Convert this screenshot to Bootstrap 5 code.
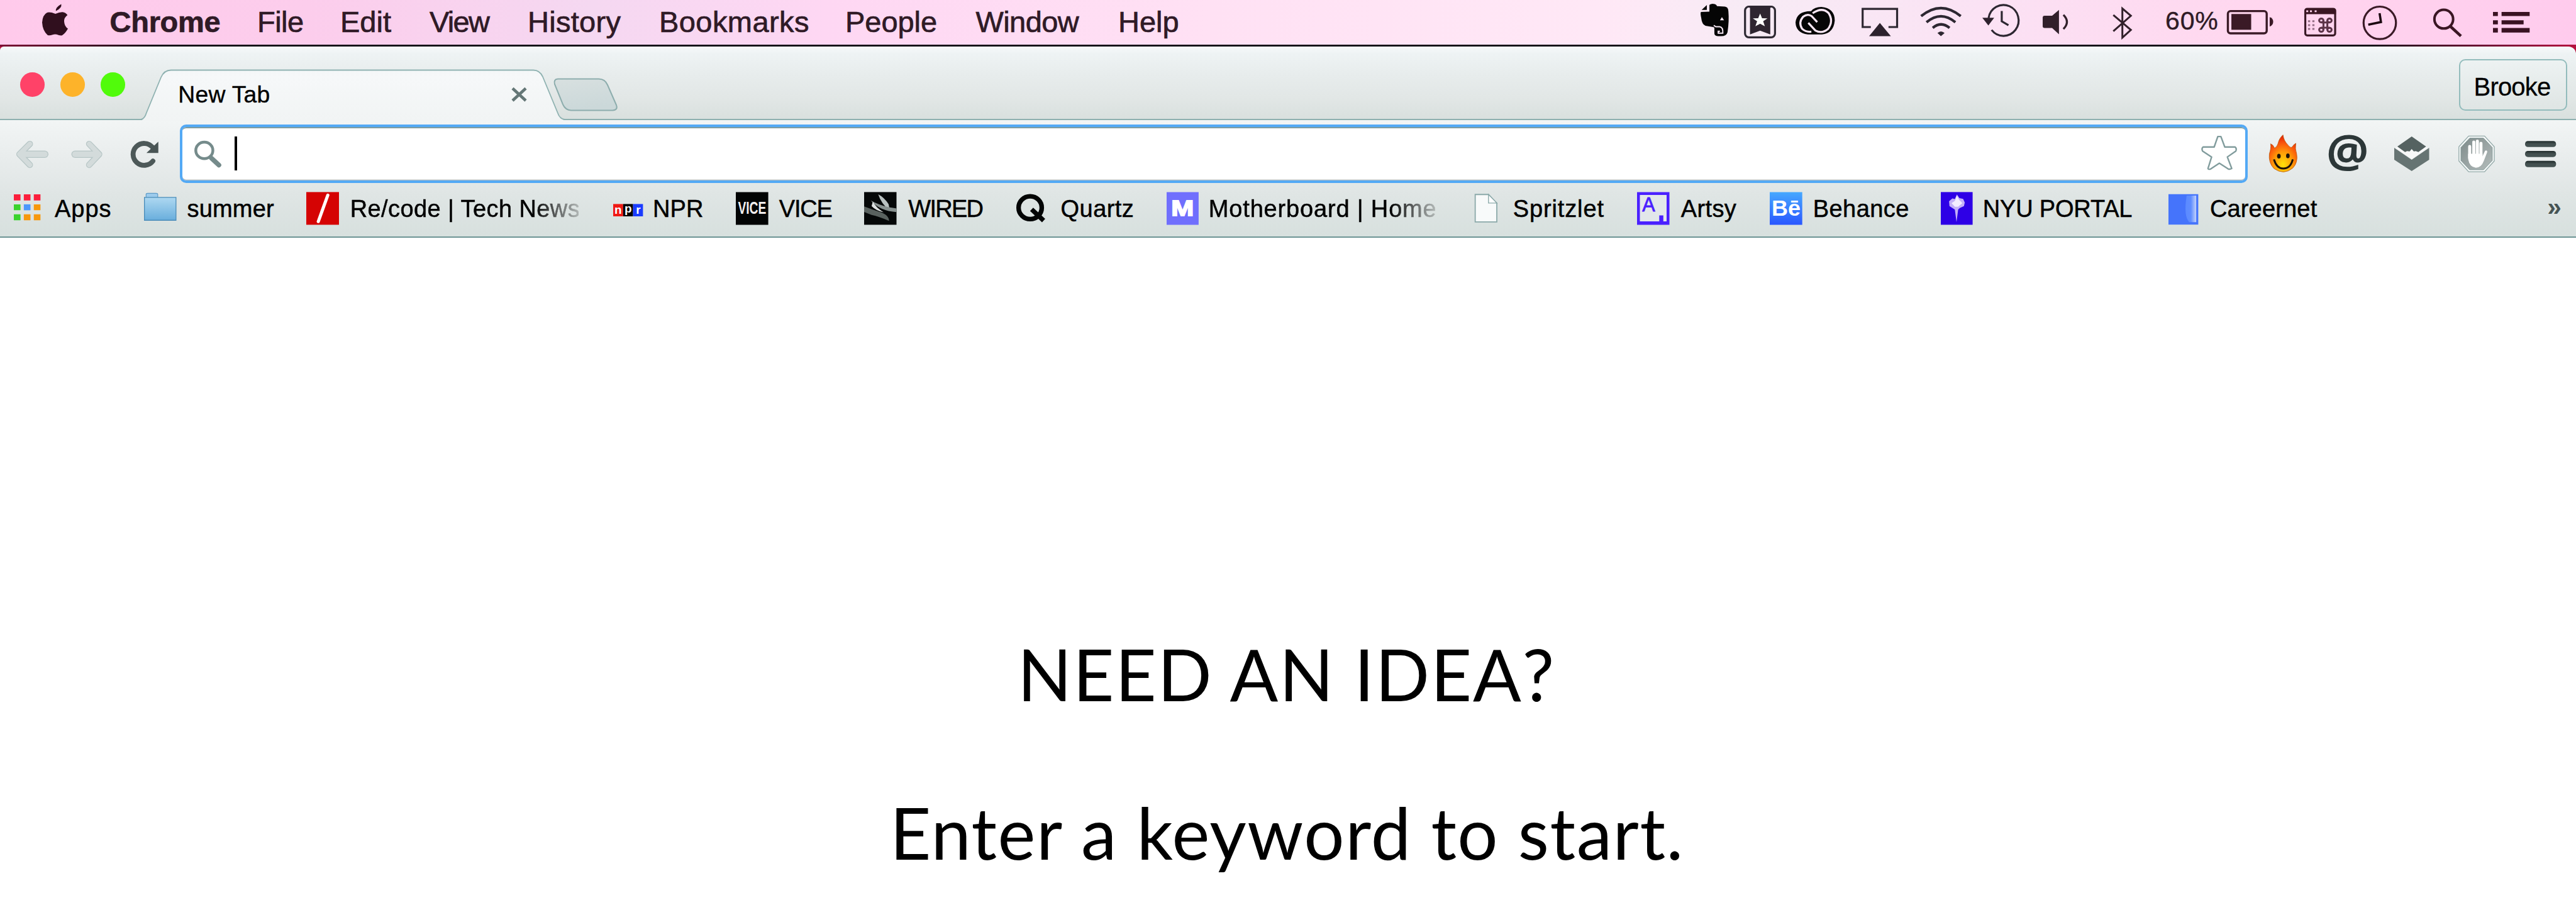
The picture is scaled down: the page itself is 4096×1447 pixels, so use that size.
<!DOCTYPE html>
<html lang="en">
<head>
<meta charset="utf-8">
<title>New Tab</title>
<link href="https://cdn.jsdelivr.net/npm/bootstrap@5.3.0/dist/css/bootstrap.min.css" rel="stylesheet">
<style>
  body { font-family: "Liberation Sans", Arial, sans-serif; background: #fff; color: #000; overflow: hidden; }
  svg { display: block; flex: none; overflow: visible; }
  svg.stretch * { vector-effect: non-scaling-stroke; }
  [data-w] { display: block; flex: none; white-space: nowrap; }
  .macbar { height: 74px; padding: 0 73.7px 0 66.8px; color: #2f1a26;
    border-image: linear-gradient(90deg, #7d0d35, #17151a 6%, #17151a 92%, #7a1238 97%, #b5123f) 1;
    border-width: 0 0 3px; border-style: solid;
    background: linear-gradient(90deg, #ffcaeb 0, #fccdec 12%, #f5d8f1 23%, #fed7f3 32%, #ffe1f4 47%, #ffe8f6 62%, #f7ebf5 68%, #fbe2f4 77%, #ffd7ef 87%, #ffcbed 100%); }
  .macbar [data-w] { font-size: 47px; line-height: 70px; -webkit-text-stroke: .7px #2f1a26; }
  .macbar .pct { font-size: 41px; line-height: 67.6px; -webkit-text-stroke: .4px #2f1a26; }
  .tabstrip-wrap { background: #b5123f; }
  .tabstrip { height: 117px; border-bottom: 2px solid #8eb0af; border-top-right-radius: 12px; border-top-left-radius: 6px;
    background: linear-gradient(#f6f9fa 0, #eef3f4 10%, #e7ecec 40%, #e2e7e6 70%, #d9e0de 100%); padding-left: 32.4px; }
  .light { width: 38.6px; height: 38.6px; border-radius: 50%; margin-top: 41px; margin-right: 25.2px; flex: none; }
  .tab-cell { width: 666px; height: 117px; margin-left: 4px; }
  .tab-art { position: absolute; left: 0; top: 0; }
  .tab-title { font-size: 37.3px; line-height: 37px; margin-top: 57.5px; margin-left: 57.6px; -webkit-text-stroke: .4px #000; }
  .profile-btn { width: 172px; height: 82px; margin: 19.5px 14.5px 0 auto; padding: 4px 0 0 24px; border: 2px solid #93bcbc; border-radius: 10px; background: linear-gradient(#edf2f2, #dfe5e4); flex: none; }
  .profile-btn [data-w] { font-size: 40px; line-height: 77px; -webkit-text-stroke: .3px #000; }
  .chrome-bars { background: linear-gradient(#f2f5f5 0, #e8ecec 35%, #dfe5e4 65%, #d7e0de 100%); border-bottom: 2px solid #6d9494; height: 187px; }
  .toolbar-row { height: 101px; padding-left: 24.5px; }
  .omnibox { width: 3288.4px; height: 92.6px; margin: 7.4px 34px 0 33.6px; border: 4.5px solid #53a9f5; border-radius: 10px; background: #fff; box-shadow: inset 0 3px 0 -1px #7f9c9f, inset 0 -1.5px 0 #b3bdc2; padding: 0 13.3px 0 19.3px; flex: none; }
  .omnibox svg { margin-top: -11.4px; }
  .caret { width: 3.7px; height: 54px; background: #000; margin: 14.7px 0 0 22px; }
  .marks { height: 84px; padding-left: 21.8px; }
  .marks [data-w] { font-size: 38px; line-height: 81px; -webkit-text-stroke: .5px #000; }
  .marks .more { font-size: 40px; font-weight: 700; line-height: 75px; color: #465454; margin-left: auto; margin-right: 25px; -webkit-text-stroke: 0; }
  .faded { -webkit-mask-image: linear-gradient(90deg, #000 0, #000 80%, rgba(0,0,0,.2) 100%); mask-image: linear-gradient(90deg, #000 0, #000 80%, rgba(0,0,0,.2) 100%); }
  .prompt { font-family: Lato, sans-serif; font-size: 113.5px; line-height: 136px; padding-top: 624.5px; gap: 116.6px; }
</style>
</head>
<body>

<header class="macbar d-flex align-items-start">
  <svg class="stretch" width="41" height="71" viewBox="101 0 62 277.3" preserveAspectRatio="none" fill="#300f1e"><path d="M134 68Q133 45 147 25Q149 50 134 68ZM133 86Q143 74 150 75Q158 78 162 94Q153 110 154 136Q155 165 163 178Q157 207 149 220Q143 222 136 214Q131 211 126 216Q119 223 114 218Q102 190 101 140Q102 92 113 78Q120 73 133 86Z"/></svg>
  <b data-gap="66.8" data-w="173.9">Chrome</b>
  <span data-gap="62.5" data-w="70">File</span>
  <span data-gap="62" data-w="78">Edit</span>
  <span data-gap="61" data-w="97">View</span>
  <span data-gap="62" data-w="145.5">History</span>
  <span data-gap="63.5" data-w="234">Bookmarks</span>
  <span data-gap="62" data-w="142">People</span>
  <span data-gap="62.5" data-w="165.3">Window</span>
  <span data-gap="64.2" data-w="92.5">Help</span>

  <div class="d-flex align-items-start ms-auto">
    <svg class="stretch" width="44.6" height="71" viewBox="92 0 130 277.3" preserveAspectRatio="none"><path d="M133 72V30Q140 23 152 24Q165 25 168 38L205 41Q220 43 221 70Q225 130 217 200Q212 226 185 225H172Q155 222 156 205V178Q157 168 150 168L115 160Q98 152 95 110Q90 80 94 74ZM97 62L121 31V62Z" fill="#050505"/><path d="M153 158L163 166H180Q197 168 195 206H174V194H182" fill="none" stroke="#f8e9f6" stroke-width="2"/><path d="M182 126L191 106L201 126Z" fill="#f8e9f6"/></svg>
    <svg data-gap="24" class="stretch" width="51.1" height="71" viewBox="292 0 149 277.3" preserveAspectRatio="none"><rect x="297" y="41" width="139" height="191" rx="18" ry="24" fill="none" stroke="#2e2a33" stroke-width="3.2"/><path d="M308 38H425L414 50V214L367 190L320 214V50Z" fill="#2e2530"/><path d="M367 84L376 113L401 114L381 132L389 163L367 147L345 163L353 132L333 114L358 113Z" fill="#fff"/></svg>
    <svg data-gap="31.2" class="stretch" width="62.4" height="71" viewBox="533 0 181 277.3" preserveAspectRatio="none"><path d="M605 69Q620 43 652 43Q714 50 714 128Q708 208 655 214H590Q535 205 533 140Q538 68 605 69Z" fill="#060606"/><path d="M633 137L608 101Q590 82 568 104Q545 140 563 178Q580 200 606 197M592 142L625 190Q655 212 683 180Q710 130 685 80Q655 42 612 82" fill="none" stroke="#fae7f5" stroke-width="3.2"/></svg>
    <svg data-gap="42.2" class="stretch" width="57.9" height="71" viewBox="837 0 169 277.3" preserveAspectRatio="none"><path d="M880 168H842V55H1002V168H962" fill="none" stroke="#2d2731" stroke-width="3.2"/><path d="M922 143L973 225H872Z" fill="#2d222d"/></svg>
    <svg data-gap="36.4" class="stretch" width="64.4" height="71" viewBox="1112 0 188 277.3" preserveAspectRatio="none" fill="none" stroke="#2d2731" stroke-width="4.2"><path d="M1114 100Q1206 0 1298 100M1139 138Q1206 64 1273 138M1168 173Q1206 130 1246 173"/><path d="M1190 205Q1206 185 1223 205L1206 225Z" fill="#2d2731" stroke="none"/></svg>
    <svg data-gap="33.6" class="stretch" width="59.4" height="71" viewBox="1398 0 173 277.3" preserveAspectRatio="none" fill="none" stroke="#2d2731" stroke-width="3.2"><path d="M1427 112A70 96 0 1 1 1441 186M1488 68V132L1519 157"/><path d="M1398 110H1453L1426 158Z" fill="#2d222d" stroke="none"/></svg>
    <svg data-gap="36.1" class="stretch" width="40.3" height="71" viewBox="205 0 137 277.3" preserveAspectRatio="none"><path d="M205 107Q206 98 215 98H256L293 62V213L256 174H215Q206 174 205 165Z" fill="#31202a"/><path d="M317 92Q355 136 317 180" fill="none" stroke="#31202a" stroke-width="3.2"/></svg>
    <svg data-gap="72" class="stretch" width="29.1" height="71" viewBox="587 0 99 277.3" preserveAspectRatio="none"><path d="M588 93L683 186L637 234V53L683 98L588 194" fill="none" stroke="#31202a" stroke-width="3"/></svg>
    <span class="pct" data-gap="55" data-w="80.2">60%</span>
    <svg data-gap="16.4" class="stretch" width="73.5" height="71" viewBox="1202 0 250 277.3" preserveAspectRatio="none" fill="#3a1a26"><rect x="1207" y="69" width="210" height="138" rx="14" ry="16" fill="none" stroke="#3a1a26" stroke-width="3.4"/><rect x="1226" y="87" width="107" height="98"/><path d="M1433 106Q1452 112 1452 135Q1452 158 1433 165Z"/></svg>
    <svg data-gap="50" class="stretch" width="50.6" height="71" viewBox="176 0 163 277.3" preserveAspectRatio="none" fill="#3a1623"><rect x="181" y="55" width="153" height="165" rx="10" ry="12" fill="none" stroke="#3a1a26" stroke-width="3.2"/><path d="M178 60L186 51H330L338 60V88H178Z"/><path d="M186 64h10v11h-10zM205 64h10v11h-10zM229 64h10v11h-10z" fill="#ffd3ee"/><path d="M195 126h11v12h-11zM217 126h11v12h-11zM195 150h11v12h-11zM217 150h11v12h-11zM195 174h11v12h-11zM217 174h11v12h-11z" fill="#967088"/><g fill="none" stroke="#5b3448" stroke-width="3"><ellipse cx="263" cy="127" rx="11" ry="12"/><ellipse cx="305" cy="127" rx="11" ry="12"/><ellipse cx="263" cy="185" rx="11" ry="12"/><ellipse cx="305" cy="185" rx="11" ry="12"/><path d="M274 127V185M294 127V185M263 140H305M263 172H305"/></g></svg>
    <svg data-gap="42.3" class="stretch" width="54" height="71" viewBox="476 0 174 277.3" preserveAspectRatio="none" fill="none" stroke-width="3.2"><ellipse cx="563" cy="142" rx="83" ry="101" stroke="#3a1a26"/><path d="M562 82L569 137L504 153" stroke="#1b0810" stroke-width="3.6"/></svg>
    <svg data-gap="58.4" class="stretch" width="45.6" height="71" viewBox="838 0 147 277.3" preserveAspectRatio="none" fill="none" stroke="#3a1623"><ellipse cx="892" cy="119" rx="48" ry="58" stroke-width="4"/><path d="M927 165L980 224" stroke-width="4.6"/></svg>
    <svg data-gap="49" class="stretch" width="58.3" height="71" viewBox="1143 0 188 277.3" preserveAspectRatio="none" fill="#391222"><path d="M1143 74h25v26h-25zM1187 74h144v26h-144zM1143 126h25v25h-25zM1187 126h113v25h-113zM1143 174h25v28h-25zM1187 174h144v28h-144z"/></svg>
  </div>
</header>

<div class="tabstrip-wrap">
  <div class="tabstrip d-flex align-items-start">
    <i class="light" style="background:#ff4268"></i>
    <i class="light" style="background:#fdb32a"></i>
    <i class="light" style="background:#51fb0b"></i>
    <div class="tab-cell position-relative d-flex align-items-start">
      <svg class="tab-art" width="666" height="117" viewBox="228 74 666 117">
        <defs><linearGradient id="tabFill" x1="0" y1="0" x2="0" y2="1"><stop offset="0" stop-color="#f4f7f8"/><stop offset=".15" stop-color="#f6f8f9"/><stop offset="1" stop-color="#f1f4f4"/></linearGradient></defs>
        <path d="M226 190.5Q230 189 233 179L256 123Q261 111.500 272 111.500H848Q858 111.500 863 122L887 180Q890 189 896 190.500V192H226Z" fill="url(#tabFill)"/>
        <path d="M224 190Q230 189 233 179L256 123Q261 111.500 272 111.500H848Q858 111.500 863 122L887 180Q890 189 898 190" fill="none" stroke="#8fb2b1" stroke-width="1.8"/>
        <path d="M815 140.500L836 160M836 140.500L815 160" stroke="#647676" stroke-width="4.6"/>
      </svg>
      <span class="tab-title position-relative" data-w="142.9">New Tab</span>
    </div>
    <svg width="102" height="117" viewBox="894 74 102 117"><defs><linearGradient id="plusFill" x1="0" y1="0" x2=".3" y2="1"><stop offset="0" stop-color="#d8e0e0"/><stop offset="1" stop-color="#cbd8d9"/></linearGradient></defs><path d="M887 125.500H952Q962 125.500 966 135L980 167Q983 175 974 175.500H908Q899 175 895 166L882 134Q880 126 887 125.500Z" fill="url(#plusFill)" stroke="#8dadad" stroke-width="2"/></svg>
    <div class="profile-btn"><span data-w="118.500">Brooke</span></div>
  </div>
</div>

<div class="chrome-bars">
  <div class="toolbar-row d-flex align-items-start">
    <svg class="stretch" width="51.5" height="101" viewBox="37 746 78 394.5" preserveAspectRatio="none" fill="none"><g stroke="#b7c6c6" stroke-linecap="round" stroke-linejoin="round"><path d="M71 894L46 958L71 1024" stroke-width="10"/><path d="M52 958H107" stroke-width="11.500"/></g><g stroke="#d3dbdb" stroke-linecap="round" stroke-linejoin="round"><path d="M71 894L46 958L71 1024" stroke-width="7.500"/><path d="M52 958H107" stroke-width="9"/></g></svg>
    <svg data-gap="37.7" class="stretch" width="49" height="101" viewBox="172 746 74 394.5" preserveAspectRatio="none" fill="none"><g stroke="#b7c6c6" stroke-linecap="round" stroke-linejoin="round"><path d="M214 894L238 958L214 1024" stroke-width="10"/><path d="M180 958H232" stroke-width="11.500"/></g><g stroke="#d3dbdb" stroke-linecap="round" stroke-linejoin="round"><path d="M214 894L238 958L214 1024" stroke-width="7.500"/><path d="M180 958H232" stroke-width="9"/></g></svg>
    <svg data-gap="44.9" class="stretch" width="44.4" height="101" viewBox="314 746 67 394.5" preserveAspectRatio="none"><path d="M367 1000A26.500 68 0 1 1 366 914" fill="none" stroke="#4d5959" stroke-width="7.800" stroke-linecap="round"/><path d="M380 880V950H351.500Z" fill="#495555"/></svg>
    <div class="omnibox d-flex align-items-start">
      <svg class="stretch" width="42.4" height="101" viewBox="468 746 64 394.5" preserveAspectRatio="none" fill="none" stroke="#758b8b"><ellipse cx="492" cy="934" rx="20.500" ry="51" stroke-width="4.500"/><path d="M509 982L527 1025" stroke-width="7.500" stroke-linecap="round"/></svg>
      <div class="caret"></div>
      <svg class="stretch ms-auto" width="55.400" height="101" viewBox="111 -4 135 394.500" preserveAspectRatio="none"><path d="M173 98H185L200 163H240Q247 172 243 188L210 225L227 296Q220 304 213 299L179 264L145 300Q136 304 135 296L149 225L114 188Q109 172 116 163H159Z" fill="#fff" stroke="#819c9d" stroke-width="2.400" stroke-linejoin="round"/></svg>
    </div>
    <svg class="stretch" width="45" height="101" viewBox="373 -4 110 394.500" preserveAspectRatio="none"><defs><radialGradient id="flame" cx=".5" cy=".8" r=".75"><stop offset="0" stop-color="#ffe20a"/><stop offset=".45" stop-color="#ff9a08"/><stop offset=".75" stop-color="#fb5a0c"/><stop offset="1" stop-color="#e62a08"/></radialGradient></defs><path d="M427 88Q430 125 446 150Q458 175 464 160Q468 148 477 140Q473 175 480 205Q486 260 465 294Q430 340 392 297Q370 260 374 205Q382 170 379 143Q390 150 394 170Q405 162 408 140Q412 110 427 88Z" fill="url(#flame)" stroke="#b8590e" stroke-width=".8"/><ellipse cx="411" cy="220" rx="7" ry="15" fill="#1d1308"/><ellipse cx="446" cy="218" rx="7" ry="15" fill="#1d1308"/><path d="M392 240Q402 297 428 297Q456 297 465 240" fill="none" stroke="#1d1308" stroke-width="3"/></svg>
    <svg data-gap="49" width="61.600" height="101" viewBox="3702 191 61.600 101"><text x="3699" y="266.500" font-family="Open Sans" font-weight="700" font-size="71" textLength="67.500" lengthAdjust="spacingAndGlyphs" fill="#2c3738">@</text></svg>
    <svg data-gap="43.700" class="stretch" width="55.500" height="101" viewBox="861 -4 136 394.500" preserveAspectRatio="none"><path d="M929 98L985 160L955 194L945 188L937 190L929 176L921 190L911 188L903 194L873 160Z" fill="#556261"/><path d="M873 162L903 196L911 190L921 192L929 178L937 192L945 190L955 196L985 162L992 170L929 238L866 170Z" fill="#f7f8f8"/><path d="M861 168L929 242L997 168V242L929 312L861 242Z" fill="#667473"/></svg>
    <svg data-gap="46.100" class="stretch" width="57.900" height="101" viewBox="1110 -4 142 394.500" preserveAspectRatio="none"><defs><linearGradient id="stopFill" x1="0" y1="0" x2="1" y2="1"><stop offset="0" stop-color="#7f8b8b"/><stop offset="1" stop-color="#b3bcbb"/></linearGradient></defs><path d="M1150 95H1212L1250 161V250L1212 317H1150L1112 250V161Z" fill="#f5f8f8" stroke="#93a9a8" stroke-width="1.300"/><path d="M1154 108H1208L1242 166V247L1208 304H1154L1120 247V166Z" fill="url(#stopFill)" stroke="#7f9594" stroke-width="1"/><path d="M1154 160V232M1170 132V225M1184 126V225M1198 140V225" stroke="#fff" stroke-width="4.800" stroke-linecap="round"/><path d="M1148 205H1204V222L1214 186Q1224 180 1222 196L1209 250Q1200 290 1178 292Q1150 286 1148 230Z" fill="#fff"/></svg>
    <svg data-gap="48.600" class="stretch" width="49.300" height="101" viewBox="1371 -4 121 394.500" preserveAspectRatio="none"><defs><linearGradient id="barFill" x1="0" y1="0" x2="0" y2="1"><stop offset="0" stop-color="#202b2b"/><stop offset=".5" stop-color="#445151"/><stop offset="1" stop-color="#445151"/></linearGradient></defs><g fill="url(#barFill)"><rect x="1371" y="126" width="121" height="37" rx="11" ry="17"/><rect x="1371" y="187" width="121" height="38" rx="11" ry="17"/><rect x="1371" y="249" width="121" height="39" rx="11" ry="17"/></g></svg>
  </div>

  <nav class="marks d-flex align-items-start">
    <svg class="stretch" width="43" height="84" viewBox="33 1140.600 65 328" preserveAspectRatio="none"><path d="M33 1207h16v38h-16zM57 1207h16v38h-16zM81 1207h16v38h-16z" fill="#fb1f3c"/><path d="M33 1269h16v37h-16zM33 1331h16v37h-16z" fill="#3bd32e"/><path d="M57 1269h16v37h-16z" fill="#4c98fb"/><path d="M81 1269h16v37h-16zM57 1331h16v37h-16zM81 1331h16v37h-16z" fill="#f7980c"/></svg>
    <span data-gap="21.200" data-w="88.600">Apps</span>
    <svg data-gap="54.200" class="stretch" width="51.500" height="84" viewBox="346 1140.600 78 328" preserveAspectRatio="none"><defs><linearGradient id="folder" x1="0" y1="0" x2="0" y2="1"><stop offset="0" stop-color="#aed8f1"/><stop offset="1" stop-color="#69aedc"/></linearGradient></defs><path d="M351 1235V1208Q351 1201 355 1201H375Q379 1201 379 1208V1235Z" fill="#9ccbec" stroke="#5f9cc8" stroke-width="1.200"/><rect x="347" y="1226" width="76" height="142" fill="url(#folder)" stroke="#4a8cb8" stroke-width="1.300"/></svg>
    <span data-gap="17.200" data-w="137.500">summer</span>
    <svg data-gap="52.300" class="stretch" width="52" height="84" viewBox="737 1140.600 79 328" preserveAspectRatio="none"><rect x="737" y="1193" width="79" height="203" fill="#d50303"/><path d="M789 1212L766 1376" stroke="#fff" stroke-width="5" stroke-linecap="round"/></svg>
    <span class="faded" data-gap="19.400" data-w="361.700">Re/code | Tech News</span>
    <svg data-gap="54.200" width="47.400" height="84" viewBox="974.600 292 47.400 84"><path d="M974.600 324.400h15.800V344h-15.800z" fill="#f01a14"/><path d="M990.400 324.400h15.800V344h-15.800z" fill="#000"/><path d="M1006.200 324.400h15.800V344h-15.800z" fill="#1a3cff"/><g fill="#fff" font-family="Liberation Sans" font-weight="700" font-size="19" text-anchor="middle"><text x="982.500" y="340">n</text><text x="998.300" y="338">p</text><text x="1014.500" y="340">r</text></g></svg>
    <span data-gap="18" data-w="76">NPR</span>
    <svg data-gap="53.600" width="51.600" height="84" viewBox="1169.600 292 51.600 84"><path d="M1169.600 305.400h51.600v52h-51.600z" fill="#020404"/><text x="1173" y="340.500" font-family="Liberation Sans" font-weight="700" font-size="27" textLength="45" lengthAdjust="spacingAndGlyphs" fill="#f1eeee">VICE</text></svg>
    <span data-gap="16.600" data-w="83.900">VICE</span>
    <svg data-gap="52.300" class="stretch" width="51.500" height="84" viewBox="568 1140.600 78 328" preserveAspectRatio="none"><defs><clipPath id="wiredClip"><path d="M568 1193h78v203h-78z"/></clipPath></defs><rect x="568" y="1193" width="78" height="203" fill="#050808"/><g clip-path="url(#wiredClip)"><path d="M602 1207Q616 1225 627 1268L630 1310Q609 1265 602 1207Z" fill="#b9c2c1"/><path d="M584 1245Q604 1275 630 1288L648 1295V1318Q605 1310 584 1245Z" fill="#87918f"/><path d="M568 1282Q586 1300 606 1316Q628 1335 628 1372Q604 1345 586 1335L568 1316Z" fill="#59625f"/><path d="M589 1252Q597 1292 615 1318Q596 1308 586 1280Z" fill="#dce1e0"/></g></svg>
    <span data-gap="17.900" data-w="118.300">WIRED</span>
    <svg data-gap="54.900" class="stretch" width="45.400" height="84" viewBox="935 1140.600 69 328" preserveAspectRatio="none" fill="none" stroke="#030505" stroke-width="7.300"><ellipse cx="968.500" cy="1290" rx="28" ry="71"/><path d="M972 1300L1001 1370"/></svg>
    <span data-gap="24.700" data-w="114.300">Quartz</span>
    <svg data-gap="53.700" width="50.900" height="84" viewBox="1854.700 292 50.900 84"><path d="M1854.700 305.400h50.900v52h-50.900z" fill="#706ffd"/><text x="1862" y="343.500" font-family="Liberation Sans" font-weight="700" font-size="36" textLength="36" lengthAdjust="spacingAndGlyphs" fill="#fff" stroke="#fff" stroke-width="1.800">M</text></svg>
    <span class="faded" data-gap="18.400" data-w="357.800">Motherboard | Home</span>
    <svg data-gap="63.500" class="stretch" width="35.700" height="84" viewBox="469 1140.600 54 328" preserveAspectRatio="none"><path d="M470 1208H502L522 1262V1378H470Z" fill="#f8fafa" stroke="#8ba9a9" stroke-width="1.800"/><path d="M502 1208V1261H522Z" fill="#fff" stroke="#8ba9a9" stroke-width="1.400"/></svg>
    <span data-gap="25" data-w="143.600">Spritzlet</span>
    <svg data-gap="53.600" class="position-relative" width="51.500" height="84" viewBox="2603.200 292 51.500 84"><path d="M2603.200 305.400h51.500v52h-51.500z" fill="#4a20ff"/><path d="M2607.700 310h42.500v42h-42.500z" fill="#e2e7ea"/><path d="M2638.500 342.500h6.500v11h-6.500z" fill="#4a20ff"/><text x="2611.500" y="336" font-family="Liberation Sans" font-size="30.500" fill="#4a20ff" stroke="#4a20ff" stroke-width=".8">A</text></svg>
    <span data-gap="17.300" data-w="88">Artsy</span>
    <svg data-gap="54" width="51.700" height="84" viewBox="2814 292 51.700 84"><defs><linearGradient id="beFill" x1="0" y1="0" x2="0" y2="1"><stop offset="0" stop-color="#46a8ff"/><stop offset="1" stop-color="#2a57ff"/></linearGradient></defs><path d="M2814 305.400h51.700v52h-51.700z" fill="url(#beFill)"/><text x="2817" y="343.500" font-family="Liberation Sans" font-weight="700" font-size="35" textLength="46" lengthAdjust="spacingAndGlyphs" fill="#fff">Bē</text></svg>
    <span data-gap="19.200" data-w="148.700">Behance</span>
    <svg data-gap="53.100" class="stretch" width="50.600" height="84" viewBox="34 1140.600 77 328" preserveAspectRatio="none"><rect x="34" y="1193" width="77" height="203" fill="#2e00e6"/><path d="M73 1208L79 1230L88 1235L92 1258L90 1280L80 1292L76 1302L72 1380L68 1302L55 1280L54 1250L62 1232L68 1236Z" fill="#c4b0f8"/><path d="M73 1215L78 1240L86 1262L76 1284H68L60 1262L68 1248Z" fill="#f4edff"/></svg>
    <span data-gap="17.700" data-w="233.600">NYU PORTAL</span>
    <svg data-gap="59.800" class="stretch" width="47.400" height="84" viewBox="584 1140.600 72 328" preserveAspectRatio="none"><defs><linearGradient id="careFill"><stop offset="0" stop-color="#5b8aff"/><stop offset=".5" stop-color="#5f8dff"/><stop offset="1" stop-color="#c3d2fb"/></linearGradient></defs><rect x="584" y="1206" width="72" height="189" fill="#4574fb"/><path d="M628 1215H651V1380H634Q620 1340 628 1215Z" fill="url(#careFill)"/></svg>
    <span data-gap="18.400" data-w="169.800">Careernet</span>
    <span class="more" data-w="20.400">»</span>
  </nav>
</div>

<main class="prompt d-flex flex-column align-items-center">
  <div data-w="842.600">NEED AN IDEA?</div>
  <div data-w="1248">Enter a keyword to start.</div>
</main>

<script src="https://cdn.jsdelivr.net/npm/bootstrap@5.3.0/dist/js/bootstrap.bundle.min.js"></script>
<script>
  // Spacing between neighbours, and tracking so that each label's ink fills its data-w width.
  const ctx = document.createElement('canvas').getContext('2d');
  document.querySelectorAll('[data-gap]').forEach(el => { el.style.marginLeft = el.dataset.gap + 'px'; });
  document.querySelectorAll('[data-w]').forEach(el => {
    const cs = getComputedStyle(el), text = el.textContent, width = +el.dataset.w;
    ctx.font = cs.fontWeight + ' ' + cs.fontSize + ' ' + cs.fontFamily;
    const m = ctx.measureText(text);
    const ink = m.actualBoundingBoxLeft + m.actualBoundingBoxRight;
    if (text.length > 1) el.style.letterSpacing = (width - ink) / (text.length - 1) + 'px';
    el.style.textIndent = m.actualBoundingBoxLeft + 1 + 'px';
    el.style.width = width + 'px';
  });
</script>
</body>
</html>
